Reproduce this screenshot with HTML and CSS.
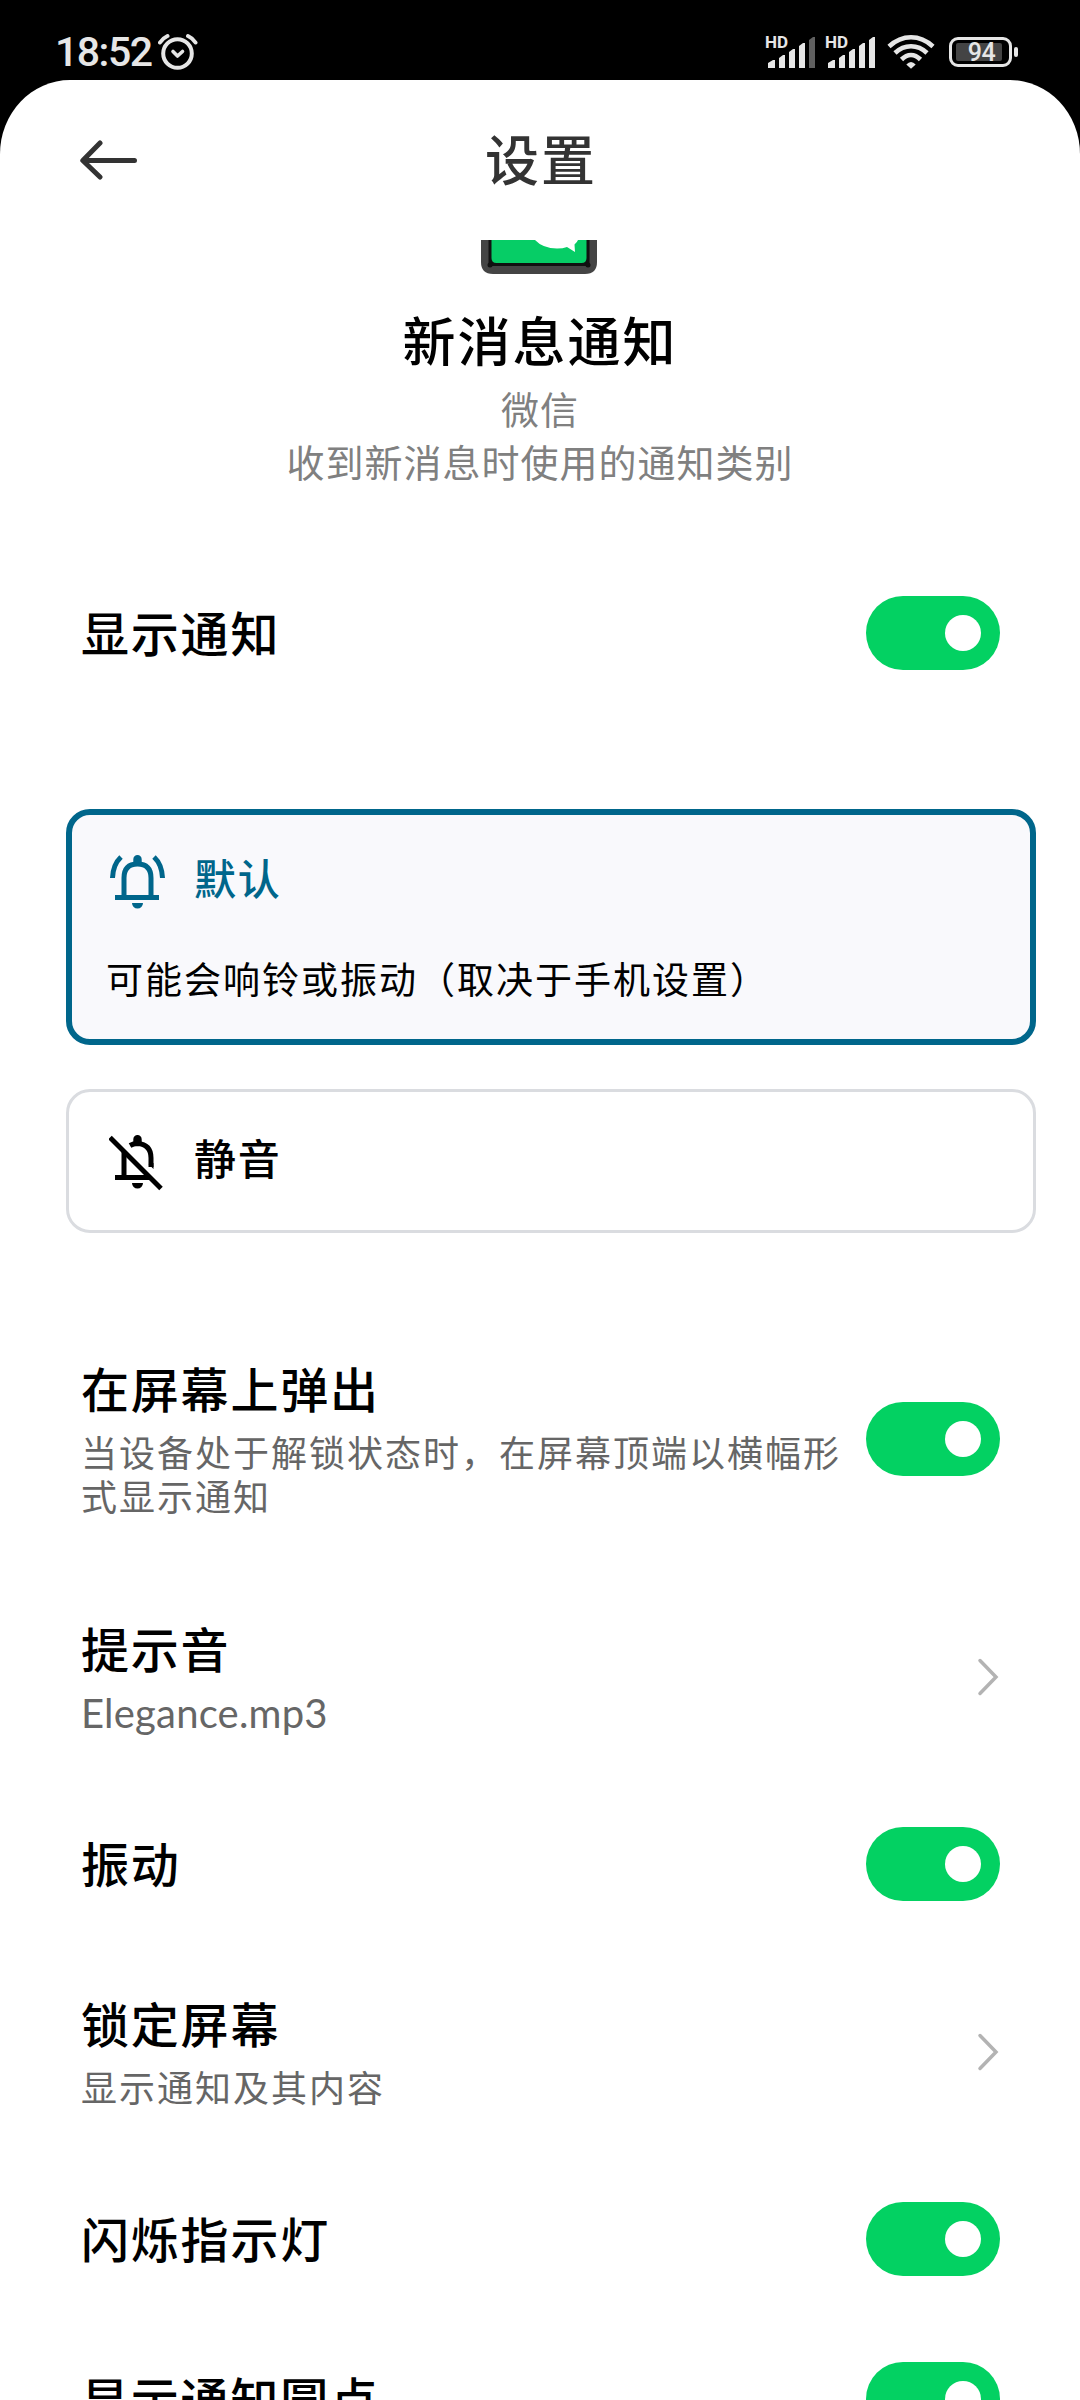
FILE: index.html
```html
<!DOCTYPE html>
<html lang="zh-CN">
<head>
    <meta charset="UTF-8">
    <meta name="viewport" content="width=device-width, initial-scale=1.0">
    <title>设置</title>
    <link rel="stylesheet" href="styles.css">
</head>
<body>
    <div class="status-bar">
        <span class="time">18:52</span>
        <svg class="alarm" width="40" height="38" viewBox="0 0 40 38" fill="none" stroke="#e6e6e6" stroke-width="4" stroke-linecap="round" stroke-linejoin="round">
            <circle cx="19.5" cy="20.5" r="14.3"/>
            <path d="M15 18.5l4.5 4.5 5-4.5" stroke-width="3.6"/>
            <path d="M2 9.500Q5 5 9.500 3M30 3Q34.500 5 37.500 9.500"/>
        </svg>
        <div class="status-icons">
            <div class="signal">
                <span class="hd">HD</span>
                <svg width="50" height="34" viewBox="0 0 50 34" fill="#e6e6e6">
                    <path d="M2 34v-5l5-3h2v8zM13 34V24l4-3h2v13zM23 34V18l4-3h2v19zM33 34V12l4-3h2v25z"/>
                    <path class="bar-off" d="M43 34V6l4-3h2v31z"/>
                </svg>
            </div>
            <div class="signal">
                <span class="hd">HD</span>
                <svg width="50" height="34" viewBox="0 0 50 34" fill="#e6e6e6">
                    <path d="M2 34v-5l5-3h2v8zM13 34V24l4-3h2v13zM23 34V18l4-3h2v19zM33 34V12l4-3h2v25zM43 34V6l4-3h2v31z"/>
                </svg>
            </div>
            <svg class="wifi" width="48" height="36" viewBox="0 0 48 36" fill="none" stroke="#e6e6e6" stroke-width="4.600">
                <path d="M2 12.500Q12 3.300 24 3.300T46 12.500"/>
                <path d="M8 19Q15 12.300 24 12.300T40 19"/>
                <path d="M14.500 25.500Q19 21 24 21T33.500 25.500"/>
                <path d="M19.300 30.500Q24 25.500 28.700 30.500L24 34.800z" fill="#e6e6e6" stroke="none"/>
            </svg>
            <div class="battery"><span>94</span></div>
            <div class="battery-cap"></div>
        </div>
    </div>

    <div class="sheet">
        <header class="header">
            <svg class="back" width="58" height="42" viewBox="0 0 58 42" fill="none" stroke="#333" stroke-width="5" stroke-linecap="round" stroke-linejoin="round">
                <path d="M54.500 21.500H3M20 4L2.800 21.500 20 38"/>
            </svg>
            <h1>设置</h1>
        </header>

        <section class="intro">
            <!-- bottom part of the app icon, the rest is scrolled under the header -->
            <svg class="app-icon" width="116" height="34" viewBox="0 0 116 34">
                <path d="M0 0h116v22q0 12-12 12H12Q0 34 0 22z" fill="#444"/>
                <path d="M7.500 0h101v26H7.500z" fill="#111"/>
                <circle cx="9" cy="25" r="2.500" fill="#111"/>
                <circle cx="107" cy="25" r="2.500" fill="#111"/>
                <path d="M10.500 0h95v18q0 5-5 5h-85q-5 0-5-5z" fill="#06cd66"/>
                <path d="M54 0Q62 8.500 76 8.500 82 8.500 86 7L94 12 93.500 4.500Q96 2.500 97 0z" fill="#fff"/>
            </svg>
            <h2>新消息通知</h2>
            <p>微信</p>
            <p>收到新消息时使用的通知类别</p>
        </section>

        <div class="row">
            <div class="label">显示通知</div>
            <div class="switch"></div>
        </div>

        <div class="options">
            <div class="option selected">
                <div class="option-head">
                    <svg width="58" height="56" viewBox="0 0 58 56" fill="none" stroke="#00668b" stroke-width="5">
                        <path d="M15 42V23Q15 9 28.500 9T42 23V42M6 42.500h44"/>
                        <path d="M3.500 23Q4 9.500 12 2M53.500 23Q53 9.500 45 2"/>
                        <path d="M24.300 8V4.200a4.200 4.200 0 0 1 8.400 0V8zM23 48h11a5.500 5.500 0 0 1-11 0z" fill="#00668b" stroke="none"/>
                    </svg>
                    <span>默认</span>
                </div>
                <p>可能会响铃或振动（取决于手机设置）</p>
            </div>
            <div class="option">
                <div class="option-head">
                    <svg width="58" height="56" viewBox="0 0 58 56" fill="none" stroke="#000" stroke-width="5">
                        <path d="M15 42V17M6 42.500h36M21 10.500Q24.500 8.500 28.500 8.500 42 9.500 42 23v9"/>
                        <path d="M1 2.500L52 53.500"/>
                        <path d="M39.500 29L44.500 34V28zM24.300 8V4.200a4.200 4.200 0 0 1 8.400 0V8zM23 48h11a5.500 5.500 0 0 1-11 0z" fill="#000" stroke="none"/>
                    </svg>
                    <span>静音</span>
                </div>
            </div>
        </div>

        <div class="row tall">
            <div class="text">
                <div class="label">在屏幕上弹出</div>
                <div class="summary">当设备处于解锁状态时，在屏幕顶端以横幅形式显示通知</div>
            </div>
            <div class="switch"></div>
        </div>
        <div class="row medium">
            <div class="text">
                <div class="label">提示音</div>
                <div class="summary latin">Elegance.mp3</div>
            </div>
            <svg class="chevron" width="24" height="40" viewBox="0 0 24 40"><path d="M4 3.500L20 20 4 36.500"/></svg>
        </div>
        <div class="row">
            <div class="label">振动</div>
            <div class="switch"></div>
        </div>
        <div class="row medium">
            <div class="text">
                <div class="label">锁定屏幕</div>
                <div class="summary">显示通知及其内容</div>
            </div>
            <svg class="chevron" width="24" height="40" viewBox="0 0 24 40"><path d="M4 3.500L20 20 4 36.500"/></svg>
        </div>
        <div class="row">
            <div class="label">闪烁指示灯</div>
            <div class="switch"></div>
        </div>
        <div class="row">
            <div class="label">显示通知圆点</div>
            <div class="switch"></div>
        </div>
    </div>
</body>
</html>
```

FILE: styles.css
```css
* {
    box-sizing: border-box;
}

body {
    margin: 0;
    height: 2400px;
    overflow: hidden;
    background: #000;
    font-family: "Noto Sans CJK SC", sans-serif;
    color: #000;
}

h1, h2, p {
    margin: 0;
    font-weight: 500;
}

svg {
    display: block;
    flex-shrink: 0;
}

/* Status bar */
.status-bar {
    height: 80px;
    padding: 0 62px 0 55px;
    display: flex;
    align-items: flex-start;
    color: #e6e6e6;
    font-family: Roboto, sans-serif;
}

.time {
    width: 102px;
    padding-top: 28px;
    font-size: 41px;
    line-height: 48px;
    font-weight: 500;
    letter-spacing: -1.500px;
    white-space: nowrap;
}

.alarm {
    margin: 33px 0 0 1px;
}

.status-icons {
    margin-left: auto;
    display: flex;
    align-items: flex-start;
}

.signal {
    position: relative;
    width: 50px;
    margin: 34px 10px 0 0;
}

.hd {
    position: absolute;
    top: 0;
    left: -1px;
    font-size: 17px;
    line-height: 17px;
    font-weight: bold;
}

.bar-off {
    fill: #606060;
}

.wifi {
    margin: 34px 14px 0 1px;
}

.battery {
    width: 63px;
    height: 30px;
    margin-top: 37px;
    padding: 3px 7px 3px 4px;
    border: 3px solid #e6e6e6;
    border-radius: 9px;
}

.battery span {
    display: block;
    height: 18px;
    width: 46px;
    padding-left: 5px;
    border-radius: 2px;
    background: #444;
    font-size: 25px;
    line-height: 19px;
    font-weight: 500;
    letter-spacing: -0.500px;
    text-align: center;
}

.battery-cap {
    width: 4px;
    height: 10px;
    margin: 47px 0 0 2px;
    border-radius: 2px;
    background: #e6e6e6;
}

/* Settings page */
.sheet {
    height: 2320px;
    background: #fff;
    border-radius: 70px 70px 0 0 / 74px 74px 0 0;
    overflow: hidden;
}

.header {
    height: 160px;
    padding: 0 80px;
    display: grid;
    grid-template-columns: 58px 1fr 58px;
    align-items: center;
    color: #333;
}

.header h1 {
    padding: 0 0 4px 2px;
    font-size: 54px;
    line-height: 80px;
    text-align: center;
    letter-spacing: 2px;
}

.intro {
    height: 313px;
    display: flex;
    flex-direction: column;
    align-items: center;
}

.app-icon {
    margin-right: 2px;
}

.intro h2 {
    margin-top: 30px;
    font-size: 53px;
    line-height: 70px;
    letter-spacing: 2px;
}

.intro p {
    font-size: 38px;
    line-height: 53px;
    font-weight: 400;
    letter-spacing: 1px;
    color: #808080;
}

.intro h2 + p {
    margin-top: 7px;
}

.row {
    height: 160px;
    padding: 0 80px 0 81px;
    display: flex;
    align-items: center;
    justify-content: space-between;
}

.row.medium {
    height: 215px;
}

.row.tall {
    height: 260px;
}

.label {
    padding-bottom: 5px;
    font-size: 48px;
    line-height: 64px;
    font-weight: 500;
    letter-spacing: 1.800px;
}

.text {
    width: 775px;
    padding-bottom: 6px;
}

.summary {
    margin-top: 5px;
    font-size: 36px;
    line-height: 44px;
    letter-spacing: 2px;
    color: #666;
}

.summary.latin {
    padding: 2px 0 0;
    margin-bottom: -2px;
    font-family: Lato, sans-serif;
    font-size: 40px;
    letter-spacing: 0.200px;
}

.switch {
    width: 134px;
    height: 74px;
    padding: 19px;
    border-radius: 37px;
    background: #03d162;
    flex-shrink: 0;
}

.switch::after {
    content: "";
    display: block;
    width: 36px;
    height: 36px;
    margin-left: auto;
    border-radius: 50%;
    background: #fff;
}

.chevron path {
    fill: none;
    stroke: #b3b3b3;
    stroke-width: 3.500px;
    stroke-linecap: round;
}

/* Default / silent choice */
.options {
    height: 596px;
    padding: 96px 44px 0 66px;
}

.option {
    height: 144px;
    padding: 43px 40px 0 40px;
    border: 3px solid #dadce0;
    border-radius: 24px;
}

.option.selected {
    height: 236px;
    margin-bottom: 44px;
    padding: 40px 34px 0 34px;
    border: 6px solid #00668b;
    background: #f9f9fc;
}

.option-head {
    display: flex;
    gap: 27px;
    height: 56px;
}

.selected .option-head {
    margin-left: 3px;
}

.option-head span {
    font-size: 42px;
    line-height: 43px;
    font-weight: 500;
    letter-spacing: 1.800px;
}

.selected .option-head span {
    color: #00668b;
}

.option p {
    margin-top: 43px;
    font-size: 37px;
    line-height: 48px;
    font-weight: 400;
    letter-spacing: 2px;
    white-space: nowrap;
}
```
